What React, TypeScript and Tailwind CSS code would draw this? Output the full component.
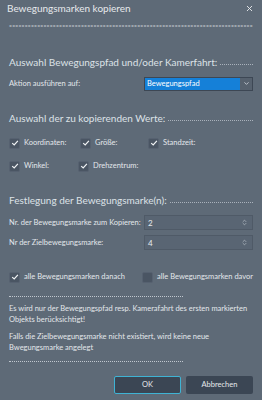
import { ChevronDown, ChevronsUpDown, X } from "lucide-react";

const font = { fontFamily: "Lato, 'Noto Sans', sans-serif" };

const Check = ({ checked = true }: { checked?: boolean }) => (
    <span className="flex h-[11px] w-[11px] shrink-0 items-center justify-center rounded-[2px] border border-[#566170] bg-[#4a5563]">
        {checked && (
            <svg viewBox="0 0 10 10" className="h-[8px] w-[8px]">
                <path d="M1.5 5.2 L4 7.5 L8.6 2.4" fill="none" stroke="#f2f4f6" strokeWidth="1.5" />
            </svg>
        )}
    </span>
);

const Header = ({ text, className = "" }: { text: string; className?: string }) => (
    <div className={`flex items-center gap-[3px] text-[10px] text-[#dde2e7] ${className}`}>
        <span className="whitespace-nowrap">{text}</span>
        <span className="mt-[3px] flex-1 border-t border-dotted border-[#a9b1bb]" />
    </div>
);

const Spin = ({ value }: { value: string }) => (
    <div className="flex h-[15px] w-[109px] items-center justify-between border border-[#4f5a67] bg-[#596573] pl-[3px] pr-[4px] text-[8px] text-[#e8ebee]">
        <span>{value}</span>
        <ChevronsUpDown size={7} className="text-[#c8ced6]" strokeWidth={2} />
    </div>
);

export default function App() {
    return (
        <div style={font} className="flex h-[400px] w-[262px] flex-col bg-[#5e6a77] px-[9px] text-[#e3e7eb]">
            {/* Title */}
            <div className="-mx-[2px] flex h-[17px] items-center justify-between">
                <span className="text-[10px] text-[#e6e9ec]">Bewegungsmarken kopieren</span>
                <X size={9} strokeWidth={2.5} className="mr-[1px] text-[#e6e9ec]" />
            </div>
            <div className="mt-[5px] flex justify-between text-[5px] leading-[9px] text-[#c9cfd6]">
                {Array.from({ length: 78 }, (_, i) => (
                    <span key={i}>=</span>
                ))}
            </div>

            <Header text="Auswahl Bewegungspfad und/oder Kamerfahrt:" className="mt-[24px]" />
            <div className="mt-[6px] flex h-[15px] items-center justify-between whitespace-nowrap text-[7.5px]">
                <span>Aktion ausführen auf:</span>
                <div className="flex h-[14px] w-[109px] items-center border border-[#3d4754] bg-[#1580d8] text-white">
                    <span className="flex-1 pl-[2px]">Bewegungspfad</span>
                    <span className="flex h-full w-[12px] items-center justify-center bg-[#56616e]">
                        <ChevronDown size={7} strokeWidth={3} className="text-[#c8ced6]" />
                    </span>
                </div>
            </div>

            <Header text="Auswahl der zu kopierenden Werte:" className="mt-[20px]" />
            <div className="mt-[10px] flex h-[14px] items-center whitespace-nowrap text-[7.5px]">
                <span className="flex w-[71px] items-center gap-[4px]"><Check />Koordinaten:</span>
                <span className="flex w-[68px] items-center gap-[4px]"><Check />Größe:</span>
                <span className="flex items-center gap-[4px]"><Check />Standzeit:</span>
            </div>
            <div className="mt-[9px] flex h-[14px] items-center whitespace-nowrap text-[7.5px]">
                <span className="flex w-[69px] items-center gap-[4px]"><Check />Winkel:</span>
                <span className="flex items-center gap-[4px]"><Check />Drehzentrum:</span>
            </div>

            <Header text="Festlegung der Bewegungsmarke(n):" className="mt-[20px]" />
            <div className="mt-[7px] flex h-[15px] items-center justify-between whitespace-nowrap text-[7.5px]">
                <span>Nr. der Bewegungsmarke zum Kopieren:</span>
                <Spin value="2" />
            </div>
            <div className="mt-[5px] flex h-[15px] items-center justify-between whitespace-nowrap text-[7.5px]">
                <span>Nr der Zielbewegungsmarke:</span>
                <Spin value="4" />
            </div>

            <div className="mt-[20px] flex h-[14px] items-center whitespace-nowrap text-[7.5px]">
                <span className="flex w-[134px] items-center gap-[4px]"><Check />alle Bewegungsmarken danach</span>
                <span className="flex items-center gap-[4px]"><Check checked={false} />alle Bewegungsmarken davor</span>
            </div>

            <div className="mt-[12px] w-[174px] border-t border-dotted border-[#c0c7cf]" />

            <p className="mt-[6px] text-[7.5px] leading-[11px]">
                Es wird nur der Bewegungspfad resp. Kamerafahrt des ersten markierten Objekts berücksichtigt!
            </p>
            <p className="mt-[6px] text-[7.5px] leading-[11px]">
                Falls die Zielbewegungsmarke nicht existiert, wird keine neue Bwegungsmarke angelegt
            </p>

            <div className="mt-[8px] w-[174px] border-t border-dotted border-[#c0c7cf]" />

            <div className="mt-[14px] flex justify-end gap-[5px] text-[7.5px]">
                <button className="h-[18px] w-[67px] rounded-[2px] border border-[#3fb3d4] bg-[#3b4654] text-[#e6e9ec]">OK</button>
                <button className="h-[18px] w-[67px] rounded-[2px] bg-[#3b4654] text-[#e6e9ec]">Abbrechen</button>
            </div>
        </div>
    );
}
